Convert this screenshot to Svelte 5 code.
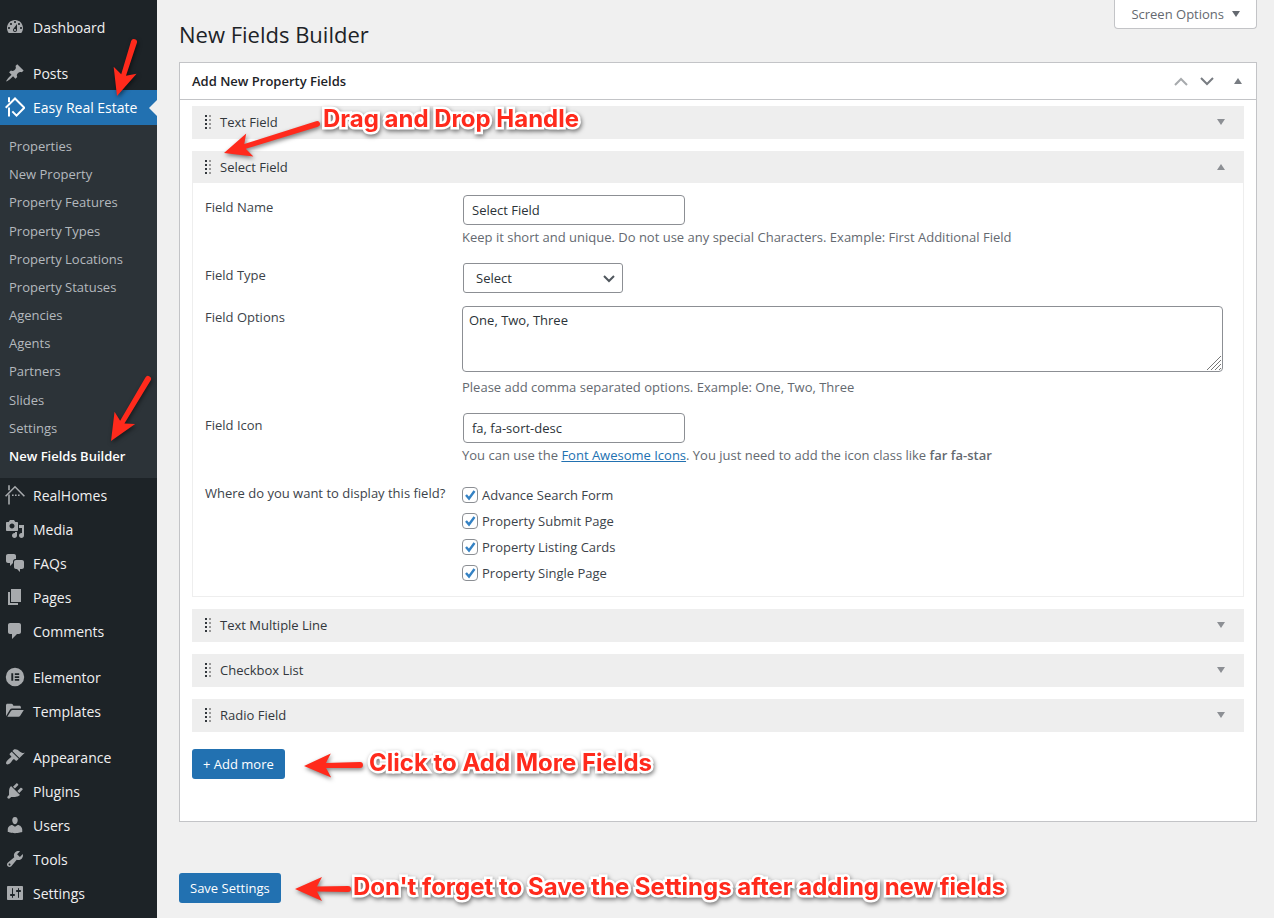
<script>
  const icons = {
    dashboard:
      'M3.76 16h12.48c1.1-1.37 1.76-3.11 1.76-5 0-4.42-3.58-8-8-8s-8 3.58-8 8c0 1.89.66 3.63 1.76 5zM10 4c.55 0 1 .45 1 1s-.45 1-1 1-1-.45-1-1 .45-1 1-1zM6 6c.55 0 1 .45 1 1s-.45 1-1 1-1-.45-1-1 .45-1 1-1zm8 0c.55 0 1 .45 1 1s-.45 1-1 1-1-.45-1-1 .45-1 1-1zm-5.37 5.55L12 7v6c0 1.1-.9 2-2 2s-2-.9-2-2c0-.57.24-1.08.63-1.45zM4 10c.55 0 1 .45 1 1s-.45 1-1 1-1-.45-1-1 .45-1 1-1zm12 0c.55 0 1 .45 1 1s-.45 1-1 1-1-.45-1-1 .45-1 1-1zm-5 3c0-.55-.45-1-1-1s-1 .45-1 1 .45 1 1 1 1-.45 1-1z',
    pin: 'M10.44 3.02l1.82-1.82 6.36 6.35-1.83 1.82c-1.05-.68-2.48-.57-3.41.36l-.75.75c-.92.93-1.04 2.35-.35 3.41l-1.83 1.82-2.41-2.41-2.8 2.79c-.42.42-3.38 2.71-3.8 2.29s1.86-3.39 2.28-3.81l2.79-2.79L4.1 9.36l1.83-1.82c1.05.69 2.48.57 3.4-.36l.75-.75c.93-.92 1.05-2.35.36-3.41z',
    media:
      'M13 11V4c0-.55-.45-1-1-1h-1.67L9 1H5L3.67 3H2c-.55 0-1 .45-1 1v7c0 .55.45 1 1 1h10c.55 0 1-.45 1-1zM7 4.5c1.38 0 2.5 1.12 2.5 2.5S8.38 9.5 7 9.5 4.5 8.38 4.5 7 5.62 4.5 7 4.5zM14 6h5v10.5c0 1.38-1.12 2.5-2.5 2.5S14 17.88 14 16.5s1.12-2.5 2.5-2.5c.17 0 .34.02.5.05V9h-3V6zm-4 8.05V13h2v3.5c0 1.38-1.12 2.5-2.5 2.5S7 17.88 7 16.5 8.12 14 9.5 14c.17 0 .34.02.5.05z',
    chat: 'M11 6h-.82C9.07 6 8 7.2 8 8.16V10l-3 3v-3H3c-1.1 0-2-.9-2-2V3c0-1.1.9-2 2-2h6c1.1 0 2 .9 2 2v3zm0 1h6c1.1 0 2 .9 2 2v5c0 1.1-.9 2-2 2h-2v3l-3-3h-1c-1.1 0-2-.9-2-2V9c0-1.1.9-2 2-2z',
    page: 'M6 15V2h10v13H6zm-1 1h8v2H3V5h2v11z',
    comment: 'M5 2h9c1.1 0 2 .9 2 2v7c0 1.1-.9 2-2 2h-2l-5 5v-5H5c-1.1 0-2-.9-2-2V4c0-1.1.9-2 2-2z',
    elementor:
      'M10 .8a9.2 9.2 0 1 0 0 18.400a9.200 9.200 0 1 0 0-18.400zM6.300 6.200h1.900v7.600H6.300zM9.800 6.200h4.400v1.700H9.800zM9.800 9.200h4.400v1.700H9.800zM9.800 12.100h4.400v1.700H9.800z',
    folder:
      'M1 15.200V4.200c0-.9.600-1.500 1.500-1.500h3.800c.7 0 1.200.3 1.500.9l.6 1.200h6c.9 0 1.500.6 1.500 1.500v1.300H7.100c-1 0-1.700.4-2.200 1.200zM2.300 15.800l3.600-5.700c.4-.7 1-1 1.700-1h11.200l-3.600 5.700c-.4.700-1 1-1.800 1z',
    brush:
      'M14.480 11.060L7.410 3.990l1.500-1.500c.5-.56 2.300-.47 3.510.32 1.210.8 1.430 1.280 2.910 2.100 1.180.64 2.450 1.260 4.450.85zm-.71.71L6.700 4.700 4.930 6.470c-.39.39-.39 1.020 0 1.410l1.060 1.060c.39.39.39 1.030 0 1.420-.6.6-1.430 1.110-2.210 1.690-.35.26-.7.53-1.010.84C1.430 14.230.4 16.080 1.400 17.070c.99 1 2.840-.03 4.180-1.360.31-.31.58-.66.85-1.020.57-.78 1.080-1.610 1.690-2.210.39-.39 1.020-.39 1.410 0l1.060 1.060c.39.39 1.020.39 1.410 0z',
    plug: 'M13.110 4.360L9.870 7.600 8 5.730l3.240-3.240c.35-.34 1.050-.2 1.560.32.52.51.66 1.210.31 1.550zm-8 1.770l.91-1.120 9.010 9.010-1.190.84c-.71.71-2.630 1.160-3.820 1.160H6.140L4.900 17.260c-.59.59-1.540.59-2.120 0-.59-.58-.59-1.530 0-2.120l1.240-1.240v-3.880c0-1.130.4-3.190 1.090-3.890zm7.260 3.970l3.240-3.240c.34-.35 1.040-.21 1.550.31.52.51.66 1.210.31 1.550l-3.240 3.250z',
    user: 'M10 9.250c-2.270 0-2.730-3.440-2.730-3.440C7 4.020 7.820 2 9.970 2c2.160 0 2.980 2.020 2.710 3.810 0 0-.41 3.440-2.680 3.440zm0 2.570L12.720 10c2.390 0 4.520 2.330 4.520 4.530v2.490s-3.650 1.130-7.240 1.130c-3.650 0-7.240-1.130-7.240-1.130v-2.490c0-2.250 1.940-4.480 4.470-4.480z',
    wrench:
      'M16.680 9.770c-1.340 1.340-3.300 1.670-4.950.99l-5.410 6.520c-.99.99-2.590.99-3.580 0s-.99-2.590 0-3.570l6.520-5.420c-.68-1.650-.35-3.610.99-4.950 1.280-1.280 3.120-1.620 4.720-1.060l-2.890 2.890 2.820 2.820 2.860-2.870c.53 1.580.18 3.390-1.080 4.650zM3.810 16.210c.4.39 1.040.39 1.430 0 .4-.4.4-1.040 0-1.430-.39-.4-1.030-.4-1.430 0-.39.39-.39 1.030 0 1.430z',
    sliders:
      'M18 16V4c0-.55-.45-1-1-1H3c-.55 0-1 .45-1 1v12c0 .55.45 1 1 1h14c.55 0 1-.45 1-1zM8 11h1c.55 0 1 .45 1 1s-.45 1-1 1H8v1.500c0 .28-.22.5-.5.5s-.5-.22-.5-.5V13H6c-.55 0-1-.45-1-1s.45-1 1-1h1V5.500c0-.28.22-.5.5-.5s.5.22.5.5V11zm5-2h-1c-.55 0-1-.45-1-1s.45-1 1-1h1V5.500c0-.28.22-.5.5-.5s.5.22.5.5V7h1c.55 0 1 .45 1 1s-.45 1-1 1h-1v5.500c0 .28-.22.5-.5.5s-.5-.22-.5-.5V9z'
  };

  const menuGroups = [
    [{ label: 'Dashboard', icon: 'dashboard' }],
    [
      { label: 'Posts', icon: 'pin' },
      { label: 'Easy Real Estate', icon: 'estate', open: true },
      { label: 'RealHomes', icon: 'homes' },
      { label: 'Media', icon: 'media' },
      { label: 'FAQs', icon: 'chat' },
      { label: 'Pages', icon: 'page' },
      { label: 'Comments', icon: 'comment' }
    ],
    [
      { label: 'Elementor', icon: 'elementor' },
      { label: 'Templates', icon: 'folder' }
    ],
    [
      { label: 'Appearance', icon: 'brush' },
      { label: 'Plugins', icon: 'plug' },
      { label: 'Users', icon: 'user' },
      { label: 'Tools', icon: 'wrench' },
      { label: 'Settings', icon: 'sliders' }
    ]
  ];

  const submenu = [
    'Properties',
    'New Property',
    'Property Features',
    'Property Types',
    'Property Locations',
    'Property Statuses',
    'Agencies',
    'Agents',
    'Partners',
    'Slides',
    'Settings',
    'New Fields Builder'
  ];

  const fields = ['Text Field', 'Select Field', 'Text Multiple Line', 'Checkbox List', 'Radio Field'];
  let openField = $state('Select Field');

  let places = $state([
    { label: 'Advance Search Form', on: true },
    { label: 'Property Submit Page', on: true },
    { label: 'Property Listing Cards', on: true },
    { label: 'Property Single Page', on: true }
  ]);

  const arrows = [
    { tail: [134, 42], tip: [117, 96] },
    { tail: [148, 379], tip: [111, 441] },
    { tail: [317, 124], tip: [224, 153] },
    { tail: [360, 765], tip: [304, 766] },
    { tail: [348, 889], tip: [295, 889] }
  ];

  const notes = [
    { text: 'Drag and Drop Handle', x: 323, y: 104 },
    { text: 'Click to Add More Fields', x: 369, y: 748 },
    { text: "Don't forget to Save the Settings after adding new fields", x: 353, y: 872 }
  ];

  // Outline of an arrow drawn along the x axis, tip at the origin, turned to its direction.
  function arrowShape({ tail, tip }) {
    const dx = tail[0] - tip[0];
    const dy = tail[1] - tip[1];
    const length = Math.hypot(dx, dy);
    const angle = (Math.atan2(dy, dx) * 180) / Math.PI;
    return {
      d: `M0 0L27 -12L22 -2.500L${length} -3A3 3 0 0 1 ${length} 3L22 2.500L27 12Z`,
      transform: `translate(${tip[0]} ${tip[1]}) rotate(${angle})`
    };
  }
</script>

{#snippet menuIcon(name)}
  <svg class="menu-icon" viewBox="0 0 20 20" aria-hidden="true">
    {#if name === 'estate'}
      <g fill="none" stroke="currentColor" stroke-width="2">
        <path d="M.7 10.800L10 1.500l9.300 9.300-7.800 7.800-4.200-4.200" />
        <path d="M4 .300v5M4 10.500v9" />
      </g>
    {:else if name === 'homes'}
      <g fill="none" stroke="currentColor" stroke-width="1.600">
        <path d="M.6 11.200L10 1.800l9.400 9.400" />
        <path d="M4 .300v5M4 9.500v10" />
      </g>
      <path fill="currentColor" d="M7 9.500h1.600v1.600H7zM10 9.500h1.600v1.600H10zM13 9.500h1.600v1.600H13z" />
    {:else}
      <path fill="currentColor" fill-rule="evenodd" d={icons[name]} />
    {/if}
  </svg>
{/snippet}

{#snippet triangle(up)}
  <svg class="triangle" viewBox="0 0 8 6" aria-hidden="true">
    <path fill="currentColor" d={up ? 'M0 6L4 0L8 6z' : 'M0 0h8L4 6z'} />
  </svg>
{/snippet}

<div class="page">
  <nav class="sidebar" aria-label="Main menu">
    {#each menuGroups as group}
      <ul class="menu-group">
        {#each group as item}
          <li>
            <a class="menu-item" class:current={item.open} href="#menu">
              {@render menuIcon(item.icon)}
              <span>{item.label}</span>
            </a>
            {#if item.open}
              <ul class="submenu">
                {#each submenu as entry}
                  <li><a class:active={entry === 'New Fields Builder'} href="#submenu">{entry}</a></li>
                {/each}
              </ul>
            {/if}
          </li>
        {/each}
      </ul>
    {/each}
  </nav>

  <main>
    <header class="top">
      <h1>New Fields Builder</h1>
      <button class="screen-options" type="button">Screen Options {@render triangle(false)}</button>
    </header>

    <section class="box">
      <div class="box-head">
        <h2>Add New Property Fields</h2>
        <div class="box-actions">
          <button type="button" class="faded" aria-label="Move up">
            <svg width="14" height="9" viewBox="0 0 14 9"><path d="M1 8l6-6 6 6" /></svg>
          </button>
          <button type="button" aria-label="Move down">
            <svg width="14" height="9" viewBox="0 0 14 9"><path d="M1 1l6 6 6-6" /></svg>
          </button>
          <button type="button" class="fold" aria-label="Toggle panel">{@render triangle(true)}</button>
        </div>
      </div>

      <div class="box-body">
        {#each fields as field}
          <article class="field" class:open={openField === field}>
            <button
              class="field-head"
              type="button"
              aria-expanded={openField === field}
              onclick={() => (openField = openField === field ? '' : field)}
            >
              <svg class="handle" width="6" height="14" viewBox="0 0 6 14" aria-hidden="true">
                <path fill="#32373c" d="M0 0h2v2H0zM0 4h2v2H0zM0 8h2v2H0zM0 12h2v2H0z" />
                <path fill="#999" d="M4 0h2v2H4zM4 4h2v2H4zM4 8h2v2H4zM4 12h2v2H4z" />
              </svg>
              <span class="field-title">{field}</span>
              {@render triangle(openField === field)}
            </button>

            {#if openField === field}
              <div class="form">
                <div class="row">
                  <label class="name" for="field-name">Field Name</label>
                  <div class="control">
                    <input id="field-name" type="text" value="Select Field" />
                    <p>Keep it short and unique. Do not use any special Characters. Example: First Additional Field</p>
                  </div>
                </div>
                <div class="row tight">
                  <label class="name" for="field-type">Field Type</label>
                  <div class="control">
                    <div class="select">
                      <select id="field-type">
                        <option>Select</option>
                        <option>Text</option>
                      </select>
                      <svg width="12" height="8" viewBox="0 0 12 8" aria-hidden="true"><path d="M1 1l5 5 5-5" /></svg>
                    </div>
                  </div>
                </div>
                <div class="row">
                  <label class="name" for="field-options">Field Options</label>
                  <div class="control">
                    <div class="area">
                      <textarea id="field-options">One, Two, Three</textarea>
                      <svg width="16" height="16" viewBox="0 0 16 16" aria-hidden="true">
                        <path d="M1 15L15 1M5 15L15 5M9 15l6-6M13 15l2-2" />
                      </svg>
                    </div>
                    <p>Please add comma separated options. Example: One, Two, Three</p>
                  </div>
                </div>
                <div class="row">
                  <label class="name" for="field-icon">Field Icon</label>
                  <div class="control">
                    <input id="field-icon" type="text" value="fa, fa-sort-desc" />
                    <p>
                      You can use the <a href="#icons">Font Awesome Icons</a>. You just need to add the icon class like
                      <strong>far fa-star</strong>
                    </p>
                  </div>
                </div>
                <div class="row" role="group" aria-labelledby="places">
                  <span class="name" id="places">Where do you want to display this field?</span>
                  <div class="control checks">
                    {#each places as place}
                      <label class="check"><input type="checkbox" bind:checked={place.on} />{place.label}</label>
                    {/each}
                  </div>
                </div>
              </div>
            {/if}
          </article>
        {/each}
        <button class="primary" type="button">+ Add more</button>
      </div>
    </section>

    <button class="primary" type="submit">Save Settings</button>
  </main>

  <div class="notes">
    <svg aria-hidden="true">
      {#each arrows as arrow}
        {@const shape = arrowShape(arrow)}
        <path d={shape.d} transform={shape.transform} />
      {/each}
    </svg>
    {#each notes as note}
      <span style="left: {note.x}px; top: {note.y}px">{note.text}</span>
    {/each}
  </div>
</div>

<style>
  :global(body) {
    margin: 0;
    background: #f0f0f0;
  }

  .page {
    position: relative;
    display: flex;
    min-height: 100vh;
    overflow: hidden;
    background: #f0f0f0;
    color: #3c434a;
    font-family: 'Open Sans', 'Noto Sans', sans-serif;
    font-size: 13px;
    line-height: 24px;
  }

  button,
  input,
  select,
  textarea {
    box-sizing: border-box;
    margin: 0;
    font: inherit;
    color: inherit;
  }

  button {
    cursor: pointer;
  }

  ul {
    margin: 0;
    padding: 0;
    list-style: none;
  }

  .sidebar {
    box-sizing: border-box;
    display: flex;
    flex-direction: column;
    flex: none;
    gap: 12px;
    width: 157px;
    padding-top: 10px;
    background: #1d2327;
  }

  .menu-item {
    box-sizing: border-box;
    display: flex;
    align-items: center;
    gap: 8px;
    height: 34px;
    padding: 2px 0 0 5px;
    color: #f0f0f1;
    font-size: 14px;
    text-decoration: none;
    white-space: nowrap;
  }

  .menu-icon {
    flex: none;
    width: 20px;
    height: 20px;
    margin-bottom: 2px;
    color: #a7aaad;
  }

  .current {
    position: relative;
    height: 35px;
    padding-top: 0;
    background: #2271b1;
    color: #fff;
  }

  .current .menu-icon {
    color: #fff;
  }

  .current::after {
    content: '';
    position: absolute;
    right: 0;
    top: 10px;
    border: 8px solid transparent;
    border-left: 0;
    border-right-color: #f0f0f0;
  }

  .submenu {
    box-sizing: border-box;
    display: flex;
    flex-direction: column;
    justify-content: space-between;
    min-height: 353px;
    padding: 7px 0 8px;
    background: #2c3338;
  }

  .submenu a {
    display: block;
    padding: 2px 9px;
    color: #b4b9be;
    text-decoration: none;
    white-space: nowrap;
  }

  .submenu .active {
    color: #fff;
    font-weight: 600;
  }

  main {
    display: flex;
    flex: 1;
    flex-direction: column;
    align-items: flex-start;
    min-width: 0;
    padding: 0 17px 15px 22px;
  }

  .top {
    display: flex;
    align-self: stretch;
    align-items: flex-start;
    justify-content: space-between;
    height: 62px;
  }

  h1 {
    margin: 20px 0 0;
    color: #1d2327;
    font-size: 22px;
    font-weight: 400;
    line-height: 28px;
  }

  .screen-options {
    display: flex;
    align-items: center;
    gap: 8px;
    height: 29px;
    padding: 0 16px;
    border: 1px solid #c3c4c7;
    border-top: 0;
    border-radius: 0 0 4px 4px;
    background: #fff;
    color: #646970;
  }

  .triangle {
    flex: none;
    width: 8px;
    height: 6px;
  }

  .box {
    align-self: stretch;
    margin-bottom: 51px;
    border: 1px solid #c3c4c7;
    background: #fff;
  }

  .box-head {
    display: flex;
    align-items: center;
    justify-content: space-between;
    height: 36px;
    padding: 0 14px 0 12px;
    border-bottom: 1px solid #c3c4c7;
  }

  h2 {
    margin: 0;
    color: #1d2327;
    font-size: 13px;
    font-weight: 600;
  }

  .box-actions {
    display: flex;
    align-items: center;
    gap: 12px;
    color: #787c82;
  }

  .box-actions button {
    display: flex;
    padding: 0;
    border: 0;
    background: none;
  }

  .box-actions button svg:not(.triangle) {
    fill: none;
    stroke: currentColor;
    stroke-width: 2;
  }

  .box-actions .faded {
    color: #a7aaad;
  }

  .box-actions .fold {
    padding-left: 8px;
  }

  .box-body {
    display: flex;
    flex-direction: column;
    align-items: flex-start;
    gap: 12px;
    padding: 6px 12px 42px;
  }

  .field {
    align-self: stretch;
  }

  .field-head {
    display: flex;
    align-items: center;
    width: 100%;
    height: 33px;
    padding: 0 19px 1px 13px;
    border: 0;
    background: #eee;
    text-align: left;
  }

  .open .field-head {
    height: 32px;
  }

  .field-title {
    flex: 1;
    margin-left: 9px;
    color: #32373c;
    font-weight: 500;
  }

  .field-head .triangle {
    color: #8c8f94;
  }

  .form {
    display: flex;
    flex-direction: column;
    gap: 14px;
    padding: 12px 20px 10px 12px;
    border: 1px solid #eee;
    border-top: 0;
  }

  .row {
    display: flex;
  }

  .row.tight {
    margin-bottom: -2px;
  }

  .name {
    flex: none;
    width: 257px;
  }

  .control {
    flex: 1;
    min-width: 0;
  }

  .control p {
    margin: 0;
    color: #646970;
  }

  .control a {
    color: #2271b1;
  }

  .control strong {
    font-weight: 600;
  }

  input[type='text'],
  select {
    display: block;
    width: 222px;
    height: 30px;
    margin-left: 1px;
    padding: 0 8px;
    border: 1px solid #8c8f94;
    border-radius: 4px;
    background: #fff;
    color: #2c3338;
  }

  .select {
    position: relative;
    width: 161px;
  }

  select {
    width: 160px;
    padding: 0 24px 0 12px;
    border-radius: 3px;
    appearance: none;
  }

  .select svg {
    position: absolute;
    right: 8px;
    top: 12px;
    fill: none;
    stroke: #50575e;
    stroke-width: 2;
    pointer-events: none;
  }

  .area {
    position: relative;
    margin: 1px 0 3px;
  }

  textarea {
    display: block;
    width: 100%;
    height: 66px;
    padding: 1px 6px;
    border: 1px solid #8c8f94;
    border-radius: 4px;
    background: #fff;
    color: #2c3338;
    resize: none;
  }

  .area svg {
    position: absolute;
    right: 1px;
    bottom: 1px;
    fill: none;
    stroke: #777;
    pointer-events: none;
  }

  .checks {
    padding-top: 1px;
  }

  .check {
    display: flex;
    align-items: center;
    gap: 4px;
    height: 26px;
  }

  .check input {
    width: 16px;
    height: 16px;
    border: 1px solid #8c8f94;
    border-radius: 4px;
    background: #fff;
    appearance: none;
  }

  .check input:checked {
    background: #fff
      url("data:image/svg+xml,%3Csvg xmlns='http://www.w3.org/2000/svg' viewBox='0 0 14 14'%3E%3Cpath fill='none' stroke='%233582c4' stroke-width='2.400' d='M3 7l3 3.500L11.500 3'/%3E%3C/svg%3E")
      center / 14px 14px no-repeat;
  }

  .primary {
    height: 30px;
    padding: 0 11px;
    border: 0;
    border-radius: 3px;
    background: #2271b1;
    color: #fff;
  }

  .box-body .primary {
    margin-top: 5px;
  }

  .notes {
    position: absolute;
    inset: 0;
    color: #ff2a1c;
    filter: drop-shadow(1px 2px 2px rgb(0 0 0 / 50%));
    pointer-events: none;
  }

  .notes svg {
    display: block;
    width: 100%;
    height: 100%;
    fill: currentColor;
  }

  .notes span {
    position: absolute;
    font-family: Inter, sans-serif;
    font-size: 24px;
    font-weight: 700;
    line-height: 30px;
    white-space: nowrap;
    -webkit-text-stroke: 5px #fff;
    paint-order: stroke fill;
    stroke-linejoin: round;
  }
</style>
